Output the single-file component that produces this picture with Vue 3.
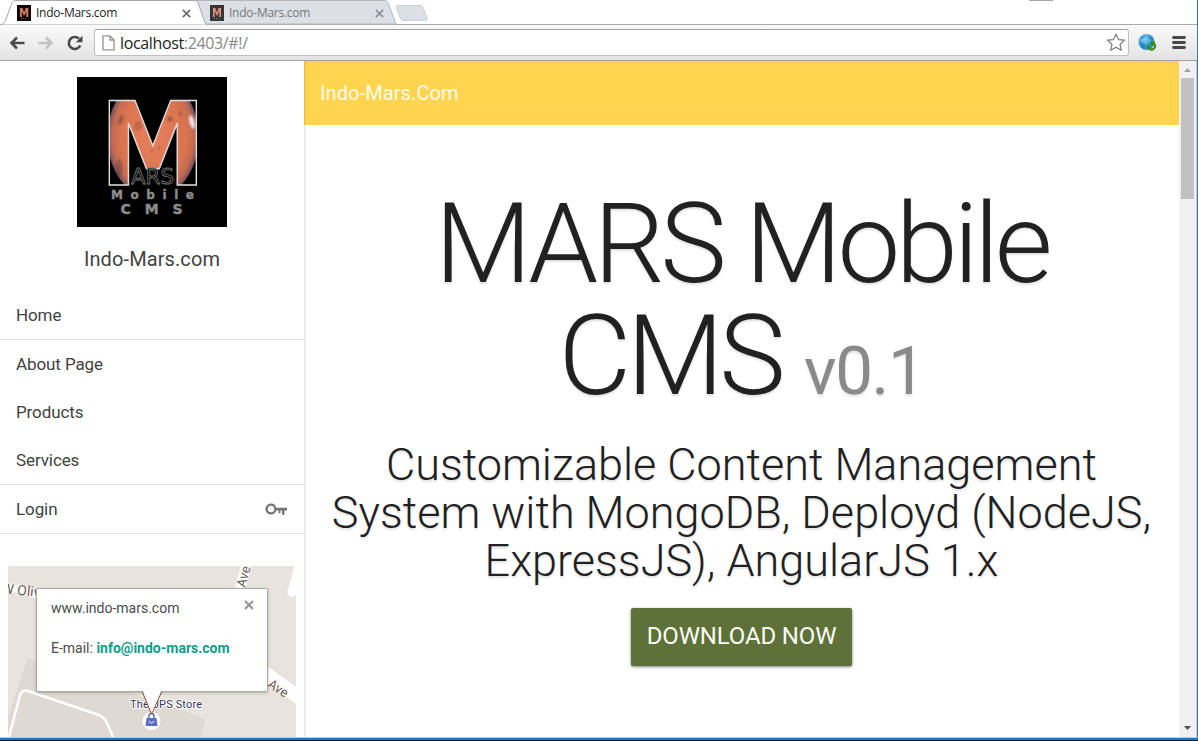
<script setup>
const tabs = [
  { title: 'Indo-Mars.com', active: true },
  { title: 'Indo-Mars.com', active: false },
]
const groups = [['Home'], ['About Page', 'Products', 'Services']]
</script>

<template>
  <div class="window">
    <div class="tabstrip">
      <div v-for="(tab, i) in tabs" :key="i" class="tab" :class="{ active: tab.active }">
        <svg class="tab-shape" width="204" height="25" viewBox="0 0 204 25">
          <path v-if="tab.active" d="M0 24.5C2 24.500 3.500 23 4.500 20.500L10.500 4C11.500 1.500 12.500 .5 15 .5H193C195.500 .5 196.500 1.500 197.500 4L203 20.500Q204 24 206 24.500" fill="#fff" stroke="#a9a9a9" />
          <path v-else d="M6 24C3.500 23 2 21 1 18L-4 4.500C-5 1.500-4 .5-1 .5H190C192.500 .5 193.500 1.500 194.500 4L202 24Z" fill="#dbe0e7" stroke="#b4b7bb" />
        </svg>
        <svg class="favicon" width="14" height="16" viewBox="0 0 14 16">
          <rect width="14" height="16" fill="#090707" />
          <text x="2" y="11.500" font-size="12" font-weight="bold" font-family="DejaVu Sans" textLength="10" lengthAdjust="spacingAndGlyphs" fill="#dd7b60">M</text>
          <path d="M4 13.500h6" stroke="#555" stroke-dasharray="1 1" />
        </svg>
        <span class="tab-title">{{ tab.title }}</span>
        <svg class="tab-close" width="9" height="9" viewBox="0 0 9 9"><path d="M.8.8l7.400 7.400M8.200.8L.8 8.200" stroke="currentColor" stroke-width="1.700" /></svg>
      </div>
      <svg class="new-tab" width="34" height="18" viewBox="0 0 34 18"><path d="M4 1.500H24C26.500 1.500 27.500 2 28.500 4.500L32 14C32.500 16 32 16.500 30 16.500H9C7 16.500 6 16 5 13.500L1.500 4C1 2 1.500 1.500 4 1.500Z" fill="#dbe0e7" stroke="#cdd0d4" /></svg>
      <i class="strip-mark"></i>
    </div>

    <div class="toolbar">
      <svg class="nav-icon" width="16" height="14" viewBox="0 0 16 14"><path d="M8 1.500L2.500 7l5.500 5.500M3 7H15.500" fill="none" stroke="#484848" stroke-width="2.500" /></svg>
      <svg class="nav-icon fwd" width="16" height="14" viewBox="0 0 16 14"><path d="M8 1.500L13.500 7L8 12.500M13 7H.5" fill="none" stroke="#c3c3c3" stroke-width="2.500" /></svg>
      <svg class="nav-icon reload" width="16" height="16" viewBox="0 0 16 16"><path d="M13.300 10.500A6 6 0 1 1 12 3.700" fill="none" stroke="#484848" stroke-width="2.500" /><path d="M15.500.8V7.200H8.800Z" fill="#484848" /></svg>
      <div class="omnibox">
        <svg width="13" height="16" viewBox="0 0 13 16"><path d="M1 .9H8L12 5V14.900H1ZM8 .9V5H12" fill="#fff" stroke="#949494" stroke-width="1.300" /></svg>
        <span class="url">localhost<em>:2403/#!/</em></span>
        <svg class="star" width="20" height="19" viewBox="0 0 20 19"><path d="M10 1.200L12.500 6.600L18.500 7.100L14 11.200L15.300 17.300L10 14.200L4.700 17.300L6 11.200L1.500 7.100L7.500 6.600Z" fill="#fff" stroke="#7b7b7b" stroke-width="1.200" stroke-linejoin="round" /></svg>
      </div>
      <svg class="globe" width="19" height="17" viewBox="0 0 19 17">
        <defs><radialGradient id="sea" cx=".4" cy=".3"><stop offset="0" stop-color="#8fd6f6" /><stop offset="1" stop-color="#2c92d0" /></radialGradient></defs>
        <circle cx="8.500" cy="8" r="8" fill="url(#sea)" />
        <path d="M1.500 5L4 2l4-.8-1 2.500-3 1zM2.500 8l3 1 2 3-2 3-3-3zM9 3l4-1 2 3-3 1z" fill="#1769a8" opacity=".4" />
        <path d="M10.800 10.600A3.300 3.300 0 1 0 15.500 9.500M16.800 8.300l-3.300 .4 1.200 2.600" fill="none" stroke="#3d8815" stroke-width="2.200" />
      </svg>
      <svg class="menu" width="14" height="13" viewBox="0 0 14 13"><path d="M1.500 1.500h11M1.500 6.500h11M1.500 11.500h11" stroke="#484848" stroke-width="2.800" stroke-linecap="round" /></svg>
    </div>

    <div class="page">
      <aside class="sidebar">
        <svg class="logo" width="150" height="150" viewBox="0 0 150 150">
          <defs>
            <radialGradient id="mars" gradientUnits="userSpaceOnUse" cx="0" cy="0" r="1" gradientTransform="translate(57.800 -47.500) scale(50 62)">
              <stop offset="0" stop-color="#e87f5c" /><stop offset=".7" stop-color="#da7550" /><stop offset=".88" stop-color="#c46b50" /><stop offset=".97" stop-color="#7d5560" /><stop offset="1" stop-color="#000" />
            </radialGradient>
            <filter id="soft"><feGaussianBlur stdDeviation="1" /></filter>
          </defs>
          <rect width="150" height="150" fill="#000" />
          <text transform="translate(22.500 107.500) scale(.925 1)" x="0" y="0" class="logo-m">M</text>
          <g filter="url(#soft)">
            <ellipse cx="44" cy="43" rx="1.800" ry="5" fill="#673c36" opacity=".6" transform="rotate(20 44 43)" />
            <ellipse cx="61" cy="49" rx="3.500" ry="4.500" fill="#8d4737" opacity=".4" />
            <circle cx="93" cy="42" r="2.600" fill="#883f30" opacity=".7" />
            <ellipse cx="103.500" cy="37" rx="1.200" ry="2.500" fill="#713830" opacity=".6" />
            <ellipse cx="42" cy="91" rx="3.500" ry="9" fill="#432c3e" opacity=".35" />
            <ellipse cx="115" cy="45" rx="2.500" ry="7" fill="#f4e0ec" transform="rotate(-15 115 45)" />
            <circle cx="75" cy="74" r="1.400" fill="#833d2c" opacity=".5" />
            <circle cx="82" cy="71" r="1.400" fill="#833d2c" opacity=".5" />
          </g>
          <text x="54" y="107" class="logo-ars" textLength="43" lengthAdjust="spacingAndGlyphs">ARS</text>
          <text x="34" y="122" class="logo-small" font-size="12" textLength="83">Mobile</text>
          <text x="43.500" y="137" class="logo-small" font-size="14" textLength="62">CMS</text>
        </svg>
        <h2 class="site-name">Indo-Mars.com</h2>
        <nav>
          <div v-for="(group, i) in groups" :key="i" class="group">
            <a v-for="item in group" :key="item" class="item">{{ item }}</a>
          </div>
          <div class="group">
            <a class="item">Login
              <svg width="24" height="24" viewBox="0 0 24 24"><path d="M7 6.500a5.500 5.500 0 1 0 5.200 7H14.500v2.800h2v-2.800h1.500v4.200h2.500v-4.200H23v-2.800H12.200A5.500 5.500 0 0 0 7 6.500Zm0 2.300a3.200 3.200 0 1 1 0 6.400 3.200 3.200 0 0 1 0-6.400Z" fill="#757575" fill-rule="evenodd" /></svg>
            </a>
          </div>
        </nav>
        <div class="map">
          <svg class="map-art" width="288" height="171" viewBox="0 0 288 171">
            <rect width="288" height="171" fill="#e8e4dd" />
            <path d="M20 92L142 133 198 153 192 171H0V150Z" fill="#dedad3" />
            <path d="M0 17L44 26V37L0 24ZM233 -1H243L237 26H226Z" fill="#fff" />
            <path d="M291 2L284.500 26" stroke="#fff" stroke-width="10" stroke-linecap="round" />
            <path d="M255 106L292 132" stroke="#fff" stroke-width="14" />
            <path d="M1 171L12 129Q14 123 20 125L91 149Q97 152 99 157L105 171" fill="none" stroke="#fff" stroke-width="2.500" />
            <g font-family="Roboto" font-size="13" fill="#6b5c55">
              <text transform="translate(-7 27) rotate(6)" font-size="14">W Olive</text>
              <text transform="translate(237 22) rotate(-75)">Ave</text>
              <text transform="translate(259 120) rotate(34)">Ave</text>
            </g>
            <text x="122" y="142" font-size="11" font-family="Roboto" fill="#33345c" stroke="#fff" stroke-width="2" paint-order="stroke" textLength="72">The UPS Store</text>
            <circle cx="143.500" cy="155" r="9.500" fill="#fff" stroke="#cfcbc5" stroke-width=".6" />
            <path d="M138.500 152H148.500L149.500 160H137.500Z" fill="#5d6fc0" /><path d="M141 152V150a2.500 2.500 0 0 1 5 0V152" fill="none" stroke="#5d6fc0" stroke-width="1.500" /><path d="M141 155q2.500 4 5 0" fill="none" stroke="#fff" />
            <path d="M134 125L143.500 148L154 125Z" fill="#fff" stroke="#934540" />
          </svg>
          <div class="info">
            <p>www.indo-mars.com</p>
            <p>E-mail: <b>info@indo-mars.com</b></p>
            <svg class="info-close" width="10" height="10" viewBox="0 0 10 10"><path d="M1 1l8 8M9 1L1 9" stroke="#929292" stroke-width="1.900" /></svg>
          </div>
          <svg class="info-tail" width="20" height="22" viewBox="0 0 20 22"><path d="M1 0L10 21L19 0Z" fill="#fff" /></svg>
        </div>
      </aside>

      <main>
        <header>Indo-Mars.Com</header>
        <section class="hero">
          <h1>MARS Mobile<br>CMS <small>v0.1</small></h1>
          <p class="lead">Customizable Content Management<br>System with MongoDB, Deployd (NodeJS,<br>ExpressJS), AngularJS 1.x</p>
          <a class="download">DOWNLOAD NOW</a>
        </section>
      </main>

      <div class="scrollbar">
        <svg width="17" height="17" viewBox="0 0 17 17"><path d="M5 11H12L8.500 7Z" fill="#a3a3a3" /></svg>
        <div class="thumb"></div>
        <svg class="down" width="17" height="17" viewBox="0 0 17 17"><path d="M5 6H12L8.500 10Z" fill="#505050" /></svg>
      </div>
    </div>
  </div>
</template>

<style>
html, body { margin: 0; overflow: hidden; background: #071724; }
</style>

<style scoped>
* { box-sizing: border-box; }
svg { display: block; flex: none; }
.window { width: 1198px; height: 740px; display: flex; flex-direction: column; background: #fff; border-right: 1px solid #247fc4; border-bottom: 2px solid #1979ca; font-family: Roboto, sans-serif; overflow: hidden; }
.tabstrip { position: relative; height: 25px; flex: none; display: flex; padding-left: 1px; border-bottom: 1px solid #a9a9a9; }
.tab { position: relative; width: 193px; height: 25px; padding-left: 16px; display: flex; align-items: center; color: #777; }
.tab.active { color: #222; z-index: 2; }
.tab-shape { position: absolute; left: 0; top: 0; overflow: visible; }
.favicon, .tab-title, .tab-close { position: relative; }
.favicon { margin-top: 1px; }
.tab:not(.active) .favicon { opacity: .78; }
.tab-title { width: 146px; margin: 1px 0 0 5px; font: 12px/16px "Open Sans", sans-serif; letter-spacing: -.25px; }
.tab-close { margin-top: 1px; color: #6f6f6f; }
.tab:not(.active) .tab-close { color: #929292; }
.new-tab { margin: 4px 0 0 8px; }
.strip-mark { position: absolute; left: 1029px; top: 0; width: 24px; height: 1px; background: #aaa; }
.toolbar { height: 36px; flex: none; display: flex; align-items: center; padding: 0 11px 0 9px; background: linear-gradient(#fafafa, #e3e3e3); border-bottom: 1px solid #a4a4a4; }
.nav-icon { margin-right: 13px; }
.nav-icon.reload { margin-right: 11px; }
.omnibox { width: 1035px; height: 27px; display: flex; align-items: center; padding-left: 7px; background: #fff; border: 1px solid #bfbfbf; border-top-color: #a0a0a0; border-radius: 3px; }
.url { flex: 1; margin-left: 5px; font: 16px/22px "Open Sans", sans-serif; letter-spacing: -.36px; color: #222; }
.url em { font-style: normal; color: #888; }
.star { margin-right: 2px; }
.globe { margin-left: 9px; }
.menu { margin-left: 15px; }
.page { flex: 1; min-height: 0; display: flex; border-right: 1px solid #c8c8c8; border-bottom: 1px solid #c8c8c8; }
.sidebar { width: 304px; flex: none; display: flex; flex-direction: column; z-index: 1; background: #fff; box-shadow: 0 0 3px rgba(0, 0, 0, .25); overflow: hidden; clip-path: inset(0 -4px 0 0); }
.logo { margin: 16px 0 0 77px; }
.logo-m { font: bold 116px "DejaVu Sans", sans-serif; fill: url(#mars); stroke: #ddd; stroke-width: 1.5px; }
.logo-ars { font: 21px "DejaVu Sans", sans-serif; fill: #000; stroke: #777; stroke-width: .8px; }
.logo-small { font-family: "DejaVu Sans", sans-serif; font-weight: bold; fill: #8c8c8c; stroke: #8c8c8c; stroke-width: .4px; }
.site-name { margin: 20px 0 20px; text-align: center; font-size: 20px; line-height: 24px; font-weight: 400; letter-spacing: .1px; color: #424242; }
.group { border-bottom: 1px solid #e0e0e0; }
.item { height: 48px; display: flex; align-items: center; justify-content: space-between; padding: 0 16px; font-size: 17px; letter-spacing: -.1px; color: #424242; }
.map { position: relative; width: 288px; height: 171px; flex: none; margin: 32px 0 0 8px; overflow: hidden; }
.info { position: absolute; left: 28px; top: 22px; width: 232px; height: 104px; padding: 9px 14px; background: #fff; border: 1px solid #aaa; border-radius: 2px; box-shadow: 0 1px 3px rgba(0, 0, 0, .25); font-size: 14px; line-height: 20px; color: #4c4c4c; }
.info p { margin: 0 0 20px; }
.info b { font-weight: 700; color: #0f9d8a; }
.info-close { position: absolute; right: 13px; top: 11px; }
.info-tail { position: absolute; left: 134px; top: 125px; }
main { flex: 1; min-width: 0; }
header { height: 64px; padding-left: 16px; background: #ffd54f; color: #fffbef; font-size: 20px; line-height: 64px; letter-spacing: .1px; }
.hero { display: flex; flex-direction: column; align-items: center; padding-top: 63px; text-align: center; }
h1 { margin: 0; font-size: 112px; line-height: 112px; font-weight: 300; letter-spacing: -.04em; color: #212121; text-shadow: 0 2px 2px rgba(0, 0, 0, .12); }
h1 small { font-size: 67.2px; line-height: 1; font-weight: 400; letter-spacing: -.02em; color: #8a8a8a; }
.lead { margin: 29px 0 23px; font-size: 45px; line-height: 48px; font-weight: 300; color: #212121; text-shadow: 0 2px 2px rgba(0, 0, 0, .12); }
.download { width: 221px; height: 58px; border-radius: 2px; background: #5e7138; box-shadow: 0 1px 3px rgba(0, 0, 0, .5); color: #fbfcf7; font-size: 24px; line-height: 56px; letter-spacing: -.15px; }
.scrollbar { width: 17px; flex: none; display: flex; flex-direction: column; align-items: center; background: #f1f1f1; }
.thumb { width: 13px; height: 121px; background: #c1c1c1; }
.down { margin-top: auto; }
</style>
